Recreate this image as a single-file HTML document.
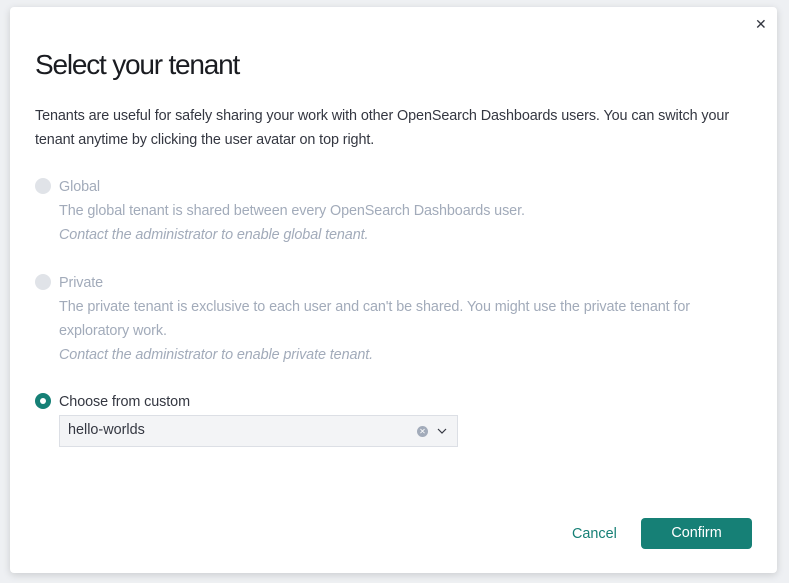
<!DOCTYPE html>
<html><head><meta charset="utf-8"><style>
html,body{margin:0;padding:0;width:789px;height:583px;overflow:hidden;background:#eef0f3;font-family:"Liberation Sans",sans-serif;}
.modal{position:absolute;left:10px;top:7px;width:767px;height:566px;background:#fff;border-radius:4px;box-shadow:0 2px 8px rgba(0,0,0,.15);}
.x{position:absolute;left:745px;top:9px;font-size:14px;color:#343741;}
h1{position:absolute;left:25px;top:42px;margin:0;font-weight:300;font-size:28px;letter-spacing:-1.2px;color:#1a1c21;}
.t{position:absolute;left:25px;font-size:14.4px;line-height:24px;color:#343741;letter-spacing:-0.1px;}
.dis{color:#a2abba}
.it{font-style:italic}
.radio{position:absolute;left:25px;width:16px;height:16px;border-radius:50%;background:#e0e3e8;}
.radio.on{background:#168076;}
.radio.on::after{content:"";position:absolute;left:5px;top:5px;width:6px;height:6px;border-radius:50%;background:#fff;}
.sel{position:absolute;left:49px;top:408px;width:397px;height:30px;background:#f3f4f6;border:1px solid #dcdfe5;font-size:14.4px;color:#343741;}
.btn{position:absolute;left:631px;top:511px;width:111px;height:31px;background:#168076;color:#fff;border-radius:4px;font-size:14.4px;text-align:center;line-height:31px;}
.cancel{position:absolute;left:562px;top:519px;color:#168076;font-size:14.4px;}
</style></head><body>
<div class="modal">
<div class="x">✕</div>
<h1>Select your tenant</h1>
<div class="t" style="top:97px;width:725px">Tenants are useful for safely sharing your work with other OpenSearch Dashboards users. You can switch your tenant anytime by clicking the user avatar on top right.</div>
<div class="radio" style="top:171px"></div>
<div class="t dis" style="left:49px;top:168px">Global</div>
<div class="t dis" style="left:49px;top:192px">The global tenant is shared between every OpenSearch Dashboards user.</div>
<div class="t dis it" style="left:49px;top:216px">Contact the administrator to enable global tenant.</div>
<div class="radio" style="top:267px"></div>
<div class="t dis" style="left:49px;top:264px">Private</div>
<div class="t dis" style="left:49px;top:288px;width:690px">The private tenant is exclusive to each user and can't be shared. You might use the private tenant for exploratory work.</div>
<div class="t dis it" style="left:49px;top:336px">Contact the administrator to enable private tenant.</div>
<div class="radio on" style="top:386px"></div>
<div class="t" style="left:49px;top:383px">Choose from custom</div>
<div class="sel"><span style="position:absolute;left:8px;top:6px">hello-worlds</span>
<span style="position:absolute;left:357px;top:10px;width:11px;height:11px;border-radius:50%;background:#a2abba;color:#fff;font-size:8px;line-height:11px;text-align:center">✕</span>
<svg style="position:absolute;left:377px;top:11px" width="10" height="8"><path d="M1 2l4 4 4-4" fill="none" stroke="#343741" stroke-width="1.2"/></svg></div>
<div class="cancel">Cancel</div>
<div class="btn">Confirm</div>
</div>
</body></html>
